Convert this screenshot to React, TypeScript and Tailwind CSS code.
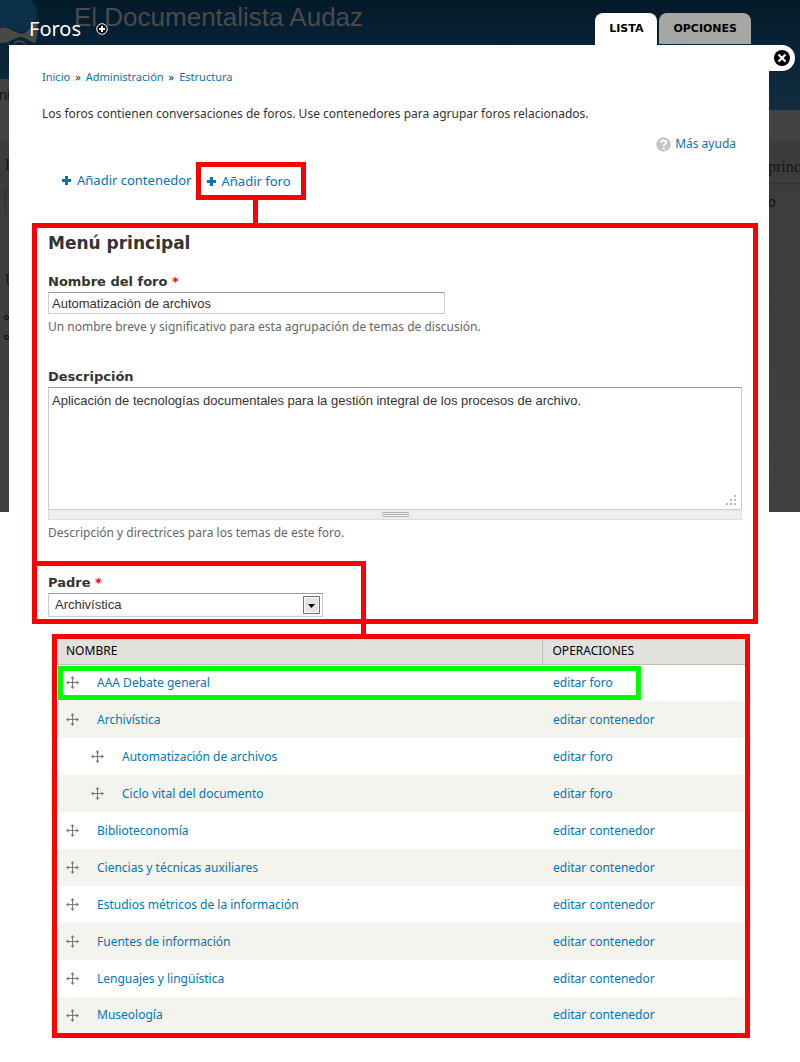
import { ReactNode } from "react";

const link = "text-[#0074bd] hover:underline";
const label = "block font-['DejaVu_Sans',sans-serif] text-[13px] font-bold leading-5";

const rows = [
  { name: "AAA Debate general", op: "editar foro", depth: 0 },
  { name: "Archivística", op: "editar contenedor", depth: 0 },
  { name: "Automatización de archivos", op: "editar foro", depth: 1 },
  { name: "Ciclo vital del documento", op: "editar foro", depth: 1 },
  { name: "Biblioteconomía", op: "editar contenedor", depth: 0 },
  { name: "Ciencias y técnicas auxiliares", op: "editar contenedor", depth: 0 },
  { name: "Estudios métricos de la información", op: "editar contenedor", depth: 0 },
  { name: "Fuentes de información", op: "editar contenedor", depth: 0 },
  { name: "Lenguajes y lingüística", op: "editar contenedor", depth: 0 },
  { name: "Museología", op: "editar contenedor", depth: 0 },
];

function PlusIcon() {
  return (
    <svg width="9" height="9" viewBox="0 0 9 9" aria-hidden="true">
      <path d="M3 0h3v3h3v3H6v3H3V6H0V3h3z" fill="#0074bd" />
    </svg>
  );
}

function DragIcon() {
  return (
    <svg width="13" height="13" viewBox="0 0 13 13" aria-hidden="true">
      <path d="M6 1h1v5h5v1H7v5H6V7H1V6h5z" fill="#787878" />
      <path
        d="M6.5 0l2 2.5h-4zM6.5 13l2-2.5h-4zM0 6.5l2.5-2v4zM13 6.5l-2.5-2v4z"
        fill="#787878"
      />
    </svg>
  );
}

// Dimmed site that stays visible behind the overlay
function Backdrop() {
  return (
    <div
      aria-hidden="true"
      className="absolute inset-x-0 top-0 h-[512px] overflow-hidden bg-gradient-to-b from-[#3b3a37] to-[#404040] text-[#161616]"
    >
      <div className="h-[110px] bg-gradient-to-b from-[#031a28] via-[#08243a] to-[#132c3d]" />
      <div className="h-[30px] bg-[#424242]" />
      <svg className="absolute left-0 top-0" width="42" height="56" viewBox="0 0 42 56">
        <path d="M0 0h31c5 4 8 10 8 18 0 18-15 35-39 36z" fill="#0a2436" />
        <path d="M0 0h31c4 4 6 10 5 18-4 4-8 12-14 14C14 31 8 24 0 27z" fill="#0c3049" />
        <path
          d="M0 28c8-3 14 5 22 6 6-1 9-9 14-12 3 6 2 14-1 21-5-1-8-5-13-6C14 37 9 44 0 43z"
          fill="#484848"
        />
        <path d="M14 44c2-4 8-4 11 0" fill="none" stroke="#484848" strokeWidth="1.5" />
      </svg>
      <p className="absolute left-[74px] top-0 text-[26px] leading-[34px] text-[#4a4a4a]">
        El Documentalista Audaz
      </p>
      <div className="absolute left-0 top-[79px] h-[61px] w-[9px] overflow-hidden bg-[#424242]">
        <p className="-ml-px mt-2 text-sm leading-4">ni</p>
      </div>
      <div className="absolute left-[5px] top-[155px] w-10 font-['Liberation_Serif',serif] text-base leading-5">
        <p className="border-b border-[#333] pb-1">B</p>
        <div className="mt-[9px] h-[25px] border border-[#2c2c2c]" />
        <p className="mt-14 border-b border-[#333] pb-1">U</p>
      </div>
      <ul className="absolute left-1 top-[307px] leading-5">
        <li className="flex h-5 items-center"><span className="size-[5px] rounded-full border border-black" /></li>
        <li className="flex h-5 items-center"><span className="size-[5px] rounded-full border border-black" /></li>
      </ul>
      <div className="absolute right-0 top-[155px] w-8 leading-5">
        <p className="border-b border-[#333] pb-1 font-['Liberation_Serif',serif] text-base">princ</p>
        <p className="mt-2 text-sm">o</p>
      </div>
    </div>
  );
}

function Frame({ className, children }: { className: string; children: ReactNode }) {
  return <div className={`border-[5px] border-[#ff0000] ${className}`}>{children}</div>;
}

export default function App() {
  return (
    <div className="relative bg-white font-['Liberation_Sans',Arial,sans-serif] text-[13px] text-[#333]">
      <Backdrop />
      <div className="relative ml-[9px] mr-[31px] font-['Noto_Sans','Lucida_Grande',sans-serif] text-xs">
        <header className="flex h-[45px] items-end justify-between pl-5 pr-[18px]">
          <div className="flex items-center gap-[15px] pb-1">
            <h1 className="text-xl leading-6 text-white">Foros</h1>
            <button type="button" aria-label="Añadir a los atajos">
              <svg width="12" height="12" viewBox="0 0 12 12">
                <circle cx="6" cy="6" r="5.3" fill="#000" stroke="#fff" />
                <path d="M5 3h2v2h2v2H7v2H5V7H3V5h2z" fill="#fff" />
              </svg>
            </button>
          </div>
          <nav className="flex gap-0.5 font-['DejaVu_Sans',sans-serif] text-[11px] font-bold text-black">
            <a href="#lista" className="h-8 rounded-t-lg bg-white px-[14px] leading-8">
              LISTA
            </a>
            <a href="#opciones" className="h-[31px] rounded-t-lg bg-[#a6a7a2] px-[14px] leading-8">
              OPCIONES
            </a>
          </nav>
        </header>

        <main className="relative bg-white pb-[25px]">
          <button
            type="button"
            aria-label="Cerrar"
            className="absolute left-full top-0 flex h-[26px] w-[26px] items-center rounded-r-full bg-white pl-[5px]"
          >
            <svg width="16" height="16" viewBox="0 0 16 16">
              <circle cx="8" cy="8" r="8" fill="#000" />
              <path d="M4.5 4.5l7 7m0-7l-7 7" stroke="#fff" strokeWidth="2.2" />
            </svg>
          </button>

          <div className="px-[33px] pt-6">
            <nav className="flex gap-[5px] text-[11px] leading-4">
              <a href="#inicio" className={link}>Inicio</a>»
              <a href="#admin" className={link}>Administración</a>»
              <a href="#estructura" className={link}>Estructura</a>
            </nav>
            <p className="mt-5 leading-[18px]">
              Los foros contienen conversaciones de foros. Use contenedores para agrupar foros
              relacionados.
            </p>
            <div className="mt-3 flex justify-end">
              <a href="#ayuda" className={`flex items-center gap-1 leading-[18px] ${link}`}>
                <svg width="15" height="15" viewBox="0 0 15 15" aria-hidden="true">
                  <circle cx="7.5" cy="7.5" r="7.2" fill="#c4c4c4" />
                  <path
                    d="M5 5.8c0-3 5.2-3 5.2-.2 0 1.7-2.5 1.8-2.5 3.7"
                    fill="none"
                    stroke="#fff"
                    strokeWidth="1.9"
                  />
                  <path d="M6.7 10.5h2v2h-2z" fill="#fff" />
                </svg>
                Más ayuda
              </a>
            </div>
          </div>

          <ul className="mt-[9px] flex items-center gap-1 pl-[53px] text-[13px]">
            <li>
              <a href="#contenedor" className={`flex items-center gap-1.5 ${link}`}>
                <PlusIcon />
                Añadir contenedor
              </a>
            </li>
            <li className="relative">
              <Frame className="pl-1.5 pr-[10px]">
                <a href="#foro" className={`flex items-center gap-1.5 leading-7 ${link}`}>
                  <PlusIcon />
                  Añadir foro
                </a>
              </Frame>
              <span className="absolute left-[57px] top-full h-[23px] w-[5px] bg-[#ff0000]" />
            </li>
          </ul>

          <Frame className="ml-[23px] mr-[11px] mt-[23px]">
            <form>
              <div className="px-[11px]">
                <h2 className="pt-[3px] font-['DejaVu_Sans',sans-serif] text-[17px] font-bold leading-6">
                  Menú principal
                </h2>
                <label htmlFor="nombre" className={`mt-[17px] ${label}`}>
                  Nombre del foro <span className="text-[#ff0000]">*</span>
                </label>
                <input
                  id="nombre"
                  type="text"
                  defaultValue="Automatización de archivos"
                  className="block h-[22px] w-full max-w-[397px] border border-[#ccc] border-t-[#999] px-[3px] font-['Liberation_Sans',Arial,sans-serif] text-[13px]"
                />
                <p className="mt-1 leading-[18px] text-[#666]">
                  Un nombre breve y significativo para esta agrupación de temas de discusión.
                </p>
                <label htmlFor="descripcion" className={`mt-[31px] ${label}`}>
                  Descripción
                </label>
                <div className="relative">
                  <textarea
                    id="descripcion"
                    defaultValue="Aplicación de tecnologías documentales para la gestión integral de los procesos de archivo."
                    className="block h-[123px] w-full resize-none border border-[#ccc] border-t-[#999] px-[3px] py-[5px] font-['Liberation_Sans',Arial,sans-serif] text-[13px] leading-4"
                  />
                  <svg
                    className="absolute bottom-[5px] right-[5px]"
                    width="12"
                    height="10"
                    viewBox="0 0 12 10"
                    aria-hidden="true"
                  >
                    <path
                      d="M9 0h2v2H9zM5 4h2v2H5zM9 4h2v2H9zM1 8h2v2H1zM5 8h2v2H5zM9 8h2v2H9z"
                      fill="#b8b8b8"
                    />
                  </svg>
                </div>
                <div className="flex h-[10px] items-center justify-center border border-t-0 border-[#ddd] bg-[#eee]">
                  <svg width="27" height="5" viewBox="0 0 27 5" aria-hidden="true">
                    <path d="M0 0h27v1H0zM0 2h27v1H0zM0 4h27v1H0z" fill="#b5b5b5" />
                  </svg>
                </div>
                <p className="mt-1 leading-[18px] text-[#666]">
                  Descripción y directrices para los temas de este foro.
                </p>
              </div>

              <Frame className="relative -mb-[5px] -ml-[5px] mt-[19px] max-w-[334px] px-[11px] pb-0.5 pt-[7px]">
                <label htmlFor="padre" className={label}>
                  Padre <span className="text-[#ff0000]">*</span>
                </label>
                <div className="relative max-w-[275px]">
                  <select
                    id="padre"
                    className="block h-6 w-full appearance-none border border-[#ccc] border-t-[#999] bg-white px-1.5 font-['Liberation_Sans',Arial,sans-serif] text-[13px]"
                  >
                    <option>Archivística</option>
                  </select>
                  <svg
                    className="pointer-events-none absolute right-[3px] top-[3px]"
                    width="17"
                    height="18"
                    viewBox="0 0 17 18"
                    aria-hidden="true"
                  >
                    <path d="M.5.5h16v17H.5z" fill="#e4e4e4" stroke="#707070" />
                    <path d="M1.5 1.5h14v15h-14z" fill="none" stroke="#fff" />
                    <path d="M5 8h7l-3.5 4z" fill="#000" />
                  </svg>
                </div>
                <span className="absolute -right-[5px] top-full h-4 w-[5px] bg-[#ff0000]" />
              </Frame>
            </form>
          </Frame>

          <Frame className="relative ml-[43px] mr-[19px] mt-[10px]">
            <table className="w-full table-fixed border-collapse">
              <thead>
                <tr className="h-[25px] border-b border-[#bebfb9] bg-[#e1e2dc] text-left text-black">
                  <th className="w-[485px] border-r border-[#bebfb9] pl-[9px] font-normal">NOMBRE</th>
                  <th className="pl-[10px] font-normal">OPERACIONES</th>
                </tr>
              </thead>
              <tbody>
                {rows.map((row) => (
                  <tr key={row.name} className="h-[37px] last:h-9 even:bg-[#f3f4ee]">
                    <td>
                      <div
                        className={`flex items-center gap-[18px] ${row.depth ? "pl-[34px]" : "pl-[9px]"}`}
                      >
                        <DragIcon />
                        <a href="#ver" className={link}>{row.name}</a>
                      </div>
                    </td>
                    <td className="pl-[11px]">
                      <a href="#editar" className={link}>{row.op}</a>
                    </td>
                  </tr>
                ))}
              </tbody>
            </table>
            <div className="pointer-events-none absolute left-px right-[104px] top-[27px] h-[34px] border-[5px] border-[#00ff00]" />
          </Frame>
        </main>
      </div>
    </div>
  );
}
